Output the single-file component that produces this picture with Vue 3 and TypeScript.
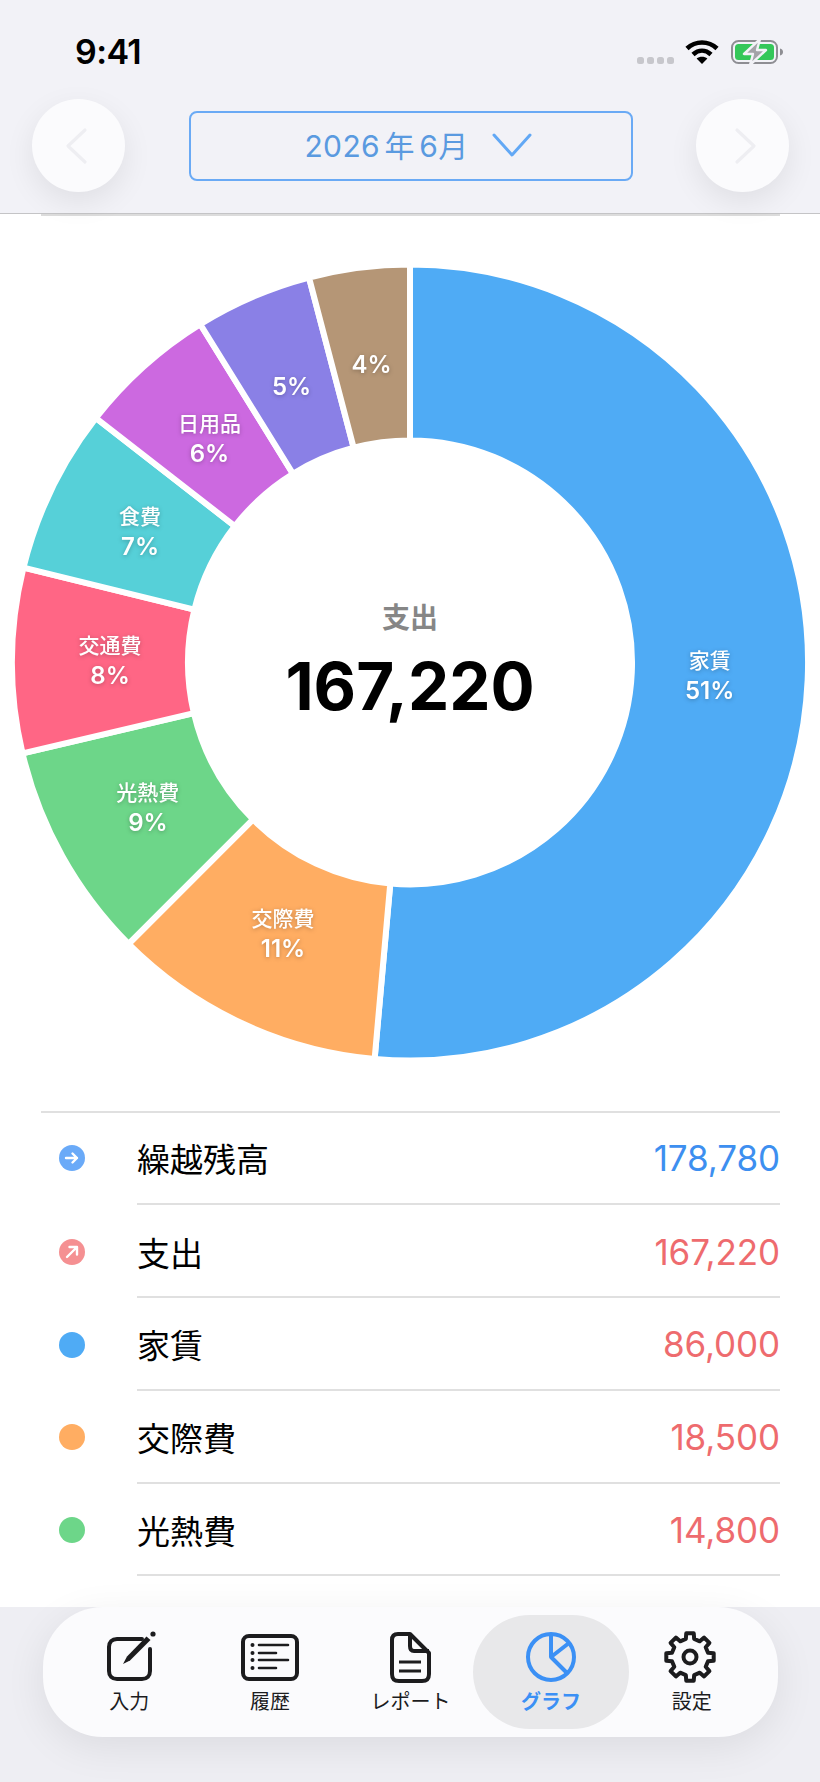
<script setup lang="ts">
interface Slice { name: string; pct: string; color: string; start: number; end: number }
const CX = 410
const CY = 446.5
const R = 398
const r = 222
const LABEL_R = 300

const defs: [string, string, string, number][] = [
  ['家賃', '51%', '#4fabf5', 185.1],
  ['交際費', '11%', '#ffad62', 225],
  ['光熱費', '9%', '#6dd689', 256.8],
  ['交通費', '8%', '#ff6685', 283.8],
  ['食費', '7%', '#56d0d8', 307.9],
  ['日用品', '6%', '#cc69e0', 328.2],
  ['', '5%', '#8a80e6', 345.3],
  ['', '4%', '#b59676', 360],
]
const slices: Slice[] = defs.map((d, i) => ({
  name: d[0], pct: d[1], color: d[2], start: i ? defs[i - 1][3] : 0, end: d[3],
}))
function pt(rad: number, deg: number): string {
  const a = (deg * Math.PI) / 180
  return `${(CX + rad * Math.sin(a)).toFixed(2)} ${(CY - rad * Math.cos(a)).toFixed(2)}`
}
function slicePath(s: Slice): string {
  const large = s.end - s.start > 180 ? 1 : 0
  return `M${pt(r, s.start)} L${pt(R, s.start)} A${R} ${R} 0 ${large} 1 ${pt(R, s.end)} L${pt(r, s.end)} A${r} ${r} 0 ${large} 0 ${pt(r, s.start)}Z`
}
function labelX(s: Slice): number {
  return CX + LABEL_R * Math.sin((((s.start + s.end) / 2) * Math.PI) / 180)
}
function labelY(s: Slice): number {
  return CY - LABEL_R * Math.cos((((s.start + s.end) / 2) * Math.PI) / 180)
}
const rows = [
  { name: '家賃', value: '86,000', color: '#4fabf5' },
  { name: '交際費', value: '18,500', color: '#ffad62' },
  { name: '光熱費', value: '14,800', color: '#6dd689' },
]
function gearPath(): string {
  const out: string[] = []
  const n = 8
  for (let i = 0; i < n; i++) {
    const c = (i * 360) / n
    const seq: [number, number][] = [[18.5, c - 13], [24, c - 9], [24, c + 9], [18.5, c + 13]]
    for (const [rad, deg] of seq) {
      const a = (deg * Math.PI) / 180
      out.push(`${(30 + rad * Math.sin(a)).toFixed(2)} ${(30 - rad * Math.cos(a)).toFixed(2)}`)
    }
  }
  return 'M' + out.join(' L') + 'Z'
}
const gear = gearPath()
</script>

<template>
  <div class="app">
    <header class="head">
      <div class="status">
        <span class="time">9:41</span>
        <div class="status-icons">
          <div class="dots"><i></i><i></i><i></i><i></i></div>
          <svg class="wifi" width="34" height="25" viewBox="0 0 34 25">
            <path d="M2 9.5C10.5 1.5 23.5 1.5 32 9.5" fill="none" stroke="#000" stroke-width="4.6" />
            <path d="M8 15.5C13.5 10.5 20.5 10.5 26 15.5" fill="none" stroke="#000" stroke-width="4.6" />
            <path d="M17 25L11.6 19.6C14.6 17 19.4 17 22.4 19.6Z" fill="#000" />
          </svg>
          <svg class="battery" width="52" height="24" viewBox="0 0 52 24">
            <rect x="1" y="1" width="45" height="22" rx="6.5" fill="none" stroke="#8e8e93" stroke-width="2" />
            <rect x="4" y="4" width="39" height="16" rx="3.5" fill="#34c759" />
            <path d="M49 8.5C51 9 52 10.4 52 12S51 15 49 15.5Z" fill="#8e8e93" />
            <path d="M29 -1L13 14H22L19 25L35 10H26Z" fill="#a3a3a8" stroke="#f2f2f7" stroke-width="2.4" stroke-linejoin="round" />
          </svg>
        </div>
      </div>
      <div class="nav">
        <button class="round">
          <svg class="chev-l" width="24" height="38" viewBox="0 0 24 38"><path d="M21 3L4 19L21 35" fill="none" stroke="#eeeef2" stroke-width="3.2" stroke-linecap="round" stroke-linejoin="round" /></svg>
        </button>
        <div class="date">
          <span class="date-text">2026 年 6月</span>
          <svg width="40" height="24" viewBox="0 0 40 24"><path d="M2 2L20 22L38 2" fill="none" stroke="#62a8f5" stroke-width="3" stroke-linecap="round" stroke-linejoin="round" /></svg>
        </div>
        <button class="round">
          <svg class="chev-r" width="24" height="38" viewBox="0 0 24 38"><path d="M3 3L20 19L3 35" fill="none" stroke="#eeeef2" stroke-width="3.2" stroke-linecap="round" stroke-linejoin="round" /></svg>
        </button>
      </div>
    </header>

    <main class="main">
      <div class="rule"></div>
      <div class="chart">
        <svg width="820" height="895" viewBox="0 0 820 895">
          <path v-for="s in slices" :key="s.color" :d="slicePath(s)" :fill="s.color" stroke="#fff" stroke-width="6" />
          <g v-for="s in slices" :key="s.pct" class="labels">
            <template v-if="s.name">
              <text :x="labelX(s)" :y="labelY(s) - 8" class="lab-name">{{ s.name }}</text>
              <text :x="labelX(s)" :y="labelY(s) + 23" class="lab-pct">{{ s.pct }}</text>
            </template>
            <text v-else :x="labelX(s)" :y="labelY(s) + 8" class="lab-pct">{{ s.pct }}</text>
          </g>
          <text x="410" y="412" class="c-title">支出</text>
          <text x="410" y="494" class="c-value">167,220</text>
        </svg>
      </div>
      <div class="list">
        <div class="row first">
          <span class="ic ic-blue">
            <svg width="16" height="16" viewBox="0 0 16 16"><path d="M2 8H13M8.5 3.5L13 8L8.5 12.5" fill="none" stroke="#fff" stroke-width="2.4" stroke-linecap="round" stroke-linejoin="round" /></svg>
          </span>
          <span class="name">繰越残高</span>
          <span class="val blue">178,780</span>
        </div>
        <div class="row">
          <span class="ic ic-red">
            <svg width="16" height="16" viewBox="0 0 16 16"><path d="M3 13L12.5 3.5M5.5 3H13V10.5" fill="none" stroke="#fff" stroke-width="2.4" stroke-linecap="round" stroke-linejoin="round" /></svg>
          </span>
          <span class="name">支出</span>
          <span class="val red">167,220</span>
        </div>
        <div v-for="row in rows" :key="row.name" class="row">
          <span class="ic" :style="{ background: row.color }"></span>
          <span class="name">{{ row.name }}</span>
          <span class="val red">{{ row.value }}</span>
        </div>
      </div>
    </main>

    <footer class="foot">
      <nav class="tabs">
        <div class="tab">
          <svg width="60" height="56" viewBox="0 0 60 56" fill="none">
            <path d="M43 10H18C13 10 10 13 10 18V42C10 47 13 50 18 50H43C48 50 51 47 51 42V20" stroke="#1c1c1e" stroke-width="4" stroke-linecap="round" />
            <path d="M24 35L28 27.5L47.5 7.5L51.5 11L31 31.5Z" fill="#1c1c1e" />
            <circle cx="54" cy="5" r="2.6" fill="#1c1c1e" />
          </svg>
          <span>入力</span>
        </div>
        <div class="tab">
          <svg width="60" height="56" viewBox="0 0 60 56" fill="none">
            <rect x="3" y="7" width="54" height="43" rx="6" stroke="#1c1c1e" stroke-width="4" />
            <g fill="#1c1c1e"><circle cx="12.5" cy="16" r="2" /><circle cx="12.5" cy="24" r="2" /><circle cx="12.5" cy="31" r="2" /><circle cx="12.5" cy="39" r="2" /></g>
            <path d="M19 16H48M19 24H36M19 31H48M19 39H36" stroke="#1c1c1e" stroke-width="2.6" stroke-linecap="round" />
          </svg>
          <span>履歴</span>
        </div>
        <div class="tab">
          <svg width="60" height="56" viewBox="0 0 60 56" fill="none">
            <path d="M18 5H30L49 24V45C49 50 47 52 42 52H19C14 52 12 50 12 45V11C12 7 14 5 18 5Z" stroke="#1c1c1e" stroke-width="4" stroke-linejoin="round" />
            <path d="M30 5V17C30 20 31 22 34 22H49" stroke="#1c1c1e" stroke-width="4" />
            <path d="M19 33H41M19 42H41" stroke="#1c1c1e" stroke-width="3" stroke-linecap="butt" />
          </svg>
          <span>レポート</span>
        </div>
        <div class="tab active">
          <svg width="60" height="56" viewBox="0 0 60 56" fill="none">
            <circle cx="30" cy="28" r="23" stroke="#3b90f5" stroke-width="4" />
            <path d="M30 5V28L48 14M30 28L46 44" stroke="#3b90f5" stroke-width="4" stroke-linejoin="round" />
          </svg>
          <span>グラフ</span>
        </div>
        <div class="tab">
          <svg width="60" height="56" viewBox="2 2 60 56" fill="none">
            <path :d="gear" stroke="#1c1c1e" stroke-width="4" stroke-linejoin="round" />
            <circle cx="30" cy="30" r="6.5" stroke="#1c1c1e" stroke-width="4" />
          </svg>
          <span>設定</span>
        </div>
      </nav>
    </footer>
  </div>
</template>

<style>
html, body { margin: 0; background: #fff; }
</style>

<style scoped>
.app {
  width: 820px;
  height: 1782px;
  display: flex;
  flex-direction: column;
  overflow: hidden;
  font-family: Inter, "Noto Sans CJK JP", sans-serif;
  background: #fff;
}
.head {
  height: 213px;
  flex: none;
  background: #f2f2f7;
  border-bottom: 1px solid #c4c4c6;
  position: relative;
  z-index: 2;
}
.status {
  height: 99px;
  box-sizing: border-box;
  padding: 32px 37px 0 75px;
  display: flex;
  justify-content: space-between;
  align-items: flex-start;
}
.time {
  font-size: 34px;
  line-height: 40px;
  font-weight: 600;
  color: #000;
  letter-spacing: -0.6px;
}
.status-icons {
  display: flex;
  align-items: flex-start;
  padding-top: 7px;
}
.dots {
  display: flex;
  gap: 3px;
  margin: 18px 11px 0 0;
}
.dots i {
  width: 7px;
  height: 7px;
  border-radius: 2.5px;
  background: #c7c7cc;
}
.wifi { margin-right: 12px; }
.battery { margin-top: 1px; }
.nav {
  display: flex;
  align-items: center;
  justify-content: space-between;
  padding: 0 31px 0 32px;
  height: 93px;
}
.round {
  width: 93px;
  height: 93px;
  border: 0;
  border-radius: 50%;
  background: #fbfbfd;
  box-shadow: 0 10px 30px rgba(0, 0, 0, 0.08);
  display: flex;
  align-items: center;
  justify-content: center;
  padding: 0;
}
.chev-l { margin-right: 6px; }
.chev-r { margin-left: 6px; }
.date {
  width: 444px;
  height: 70px;
  box-sizing: border-box;
  border: 2px solid #6aaaf5;
  border-radius: 8px;
  display: flex;
  align-items: center;
  justify-content: center;
  gap: 23px;
  padding: 0 0 4px 15px;
}
.date-text {
  font-size: 30px;
  color: #5a9ae0;
  word-spacing: -4.5px;
  letter-spacing: 0.4px;
}
.date svg { margin-top: 2px; }
.main {
  flex: 1;
  min-height: 0;
  overflow: hidden;
  background: #fff;
  position: relative;
}
.rule {
  height: 2px;
  margin: 0 40px 0 41px;
  background: #dcdcdc;
}
.chart { height: 895px; }
.chart svg { display: block; }
.labels text {
  text-anchor: middle;
  fill: #fff;
  filter: drop-shadow(0 1px 2px rgba(0, 0, 0, 0.25));
}
.lab-name { font-size: 21px; font-weight: 500; }
.lab-pct { font-size: 24px; font-weight: 600; }
.c-title {
  text-anchor: middle;
  font-size: 28px;
  font-weight: 700;
  fill: #868686;
}
.c-value {
  text-anchor: middle;
  font-size: 65.5px;
  font-weight: 700;
  fill: #000;
}
.list { margin: 0 40px 0 41px; }
.row {
  height: 92.8px;
  box-sizing: border-box;
  display: flex;
  align-items: center;
  position: relative;
  padding-left: 96px;
}
.row.first { height: 94.3px; }
.row::after {
  content: "";
  position: absolute;
  left: 96px;
  right: 0;
  bottom: 0;
  height: 2px;
  background: #e0e0e0;
}
.row.first::before {
  content: "";
  position: absolute;
  left: 0;
  right: 0;
  top: 0;
  height: 2px;
  background: #e0e0e0;
}
.ic {
  position: absolute;
  left: 18px;
  top: 33.5px;
  width: 26px;
  height: 26px;
  border-radius: 50%;
  display: flex;
  align-items: center;
  justify-content: center;
}
.ic-blue { background: #6aaaf8; }
.ic-red { background: #f59092; }
.name {
  font-size: 33px;
  color: #000;
  flex: 1;
}
.val {
  font-size: 35px;
  font-weight: 400;
  letter-spacing: -0.1px;
}
.blue { color: #3d8ff0; }
.red { color: #ee6b6e; }
.foot {
  height: 175px;
  flex: none;
  background: #eeeef3;
  position: relative;
}
.tabs {
  position: relative;
  margin: 0 42px 0 43px;
  height: 130px;
  box-sizing: border-box;
  padding: 8px 16px;
  border-radius: 60px;
  background: #fbfbfd;
  box-shadow: 0 10px 40px rgba(0, 0, 0, 0.08);
  display: grid;
  grid-template-columns: repeat(5, 1fr);
}
.tab {
  display: flex;
  flex-direction: column;
  align-items: center;
  padding-top: 14px;
  font-size: 20px;
  line-height: 24px;
  font-weight: 400;
  color: #1c1c1e;
  white-space: nowrap;
}
.tab svg { display: block; margin-bottom: 5px; }
.tab.active {
  margin: 0 -8px;
  border-radius: 57px;
  background: #e8e8ea;
  color: #3b90f5;
  font-weight: 700;
}
</style>
